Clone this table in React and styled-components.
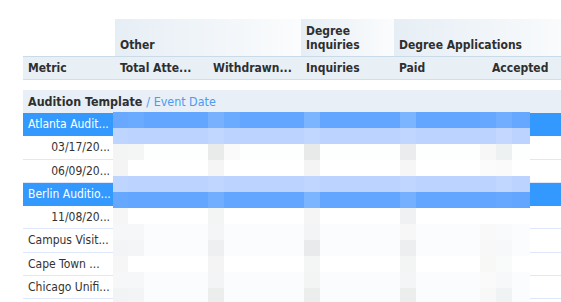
import React from "react";
import styled, { createGlobalStyle } from "styled-components";

const GlobalStyle = createGlobalStyle`
  html, body { margin: 0; padding: 0; background: #ffffff; overflow: hidden; }
  body { font-family: "DejaVu Sans Condensed", "DejaVu Sans", Tahoma, sans-serif; }
`;

const COLS = "92px 93px 93px 93px 93px 93px";

const Page = styled.div`
  position: relative;
  width: 561px;
  height: 302px;
  overflow: hidden;
  padding: 19px 0 0 23px;
  box-sizing: border-box;
  color: #2f2f2f;
`;

const Grid = styled.div`
  display: grid;
  grid-template-columns: ${COLS};
  width: 557px;
`;

const GroupRow = styled(Grid)`
  height: 37px;
`;

const GroupCell = styled.div`
  grid-column: span ${(p) => p.$span || 1};
  display: flex;
  align-items: flex-end;
  padding: 0 5px 4px;
  font-size: 12px;
  font-weight: bold;
  line-height: 14px;
  background: ${(p) =>
    p.$blank ? "transparent" : "linear-gradient(to right, #e6eef5, #fbfcfd)"};
`;

const HeadRow = styled(Grid)`
  height: 22px;
  background: #e8f0f6;
  border-top: 1px solid #c9dbe8;
  border-bottom: 1px solid #d0dfea;
`;

const HeadCell = styled.div`
  display: flex;
  align-items: center;
  padding: 0 5px;
  font-size: 12px;
  font-weight: bold;
  white-space: nowrap;
  overflow: hidden;
`;

const Band = styled.div`
  margin-top: 10px;
  height: 23px;
  width: 557px;
  background: #e8eff6;
  display: flex;
  align-items: center;
  padding: 0 5px;
  box-sizing: border-box;
  font-size: 12.4px;
  font-weight: bold;
  white-space: nowrap;
`;

const Crumb = styled.span`
  font-weight: normal;
  color: #4b9cf0;
  margin-left: 4px;
`;

const Body = styled.div`
  display: flex;
  flex-direction: column;
`;

const Row = styled(Grid)`
  height: 23.25px;
  box-sizing: border-box;
  background: ${(p) => (p.$active ? "#3399ff" : "#ffffff")};
  border-bottom: 1px solid ${(p) => (p.$active ? "#3399ff" : "#dfe8fb")};
`;

const MetricCell = styled.div`
  display: flex;
  align-items: center;
  justify-content: ${(p) => (p.$child ? "flex-end" : "flex-start")};
  padding: 0 5px;
  font-size: 12px;
  white-space: nowrap;
  overflow: hidden;
  color: ${(p) => (p.$active ? "#ffffff" : "#333333")};
`;

/* pixelated cover drawn over the figure columns */
const Mosaic = styled.div`
  position: absolute;
  left: 113px;
  top: 112px;
  width: 417px;
  display: grid;
  grid-template-columns: 15px repeat(25, 16px) 2px;
  grid-auto-rows: 16px;
`;

const Tile = styled.div``;

const groups = [
  { label: "", span: 1, blank: true },
  { label: "Other", span: 2 },
  { label: "Degree Inquiries", span: 1 },
  { label: "Degree Applications", span: 2 },
];

const heads = ["Metric", "Total Atte...", "Withdrawn...", "Inquiries", "Paid", "Accepted"];

const rows = [
  { label: "Atlanta Audit...", active: true },
  { label: "03/17/20...", child: true },
  { label: "06/09/20...", child: true },
  { label: "Berlin Auditio...", active: true },
  { label: "11/08/20...", child: true },
  { label: "Campus Visit..." },
  { label: "Cape Town ..." },
  { label: "Chicago Unifi..." },
  { label: "" },
];

const BLUE = "#62a6ff";
const PALE = "#bcd3ff";

const tiles = [
  { base: BLUE, marks: { 0: "#68a9ff", 1: "#6aabff", 6: "#78b2ff", 7: "#6aaaff", 12: "#7bb4ff", 18: "#7bb4ff", 23: "#66a8ff", 24: "#72aeff", 25: "#66a8ff", 26: "#66a8ff" } },
  { base: PALE, marks: { 0: "#bed5ff", 6: "#c2d7ff", 12: "#c2d7ff", 18: "#c1d6ff", 24: "#c4d8ff" } },
  { base: "#fdfefe", marks: { 0: "#f3f4f4", 1: "#f4f5f5", 6: "#e9eaea", 7: "#fafafa", 12: "#e8e9e9", 18: "#ebeced", 23: "#f7f7f7", 24: "#eef1f1" } },
  { base: "#ffffff", marks: { 0: "#f4f4f4", 6: "#f5f5f5", 12: "#f4f4f4", 18: "#f6f6f6", 23: "#fbfbfb", 24: "#fafafa" } },
  { base: PALE, marks: { 0: "#bed5ff", 6: "#c0d6ff", 12: "#c0d6ff", 18: "#c0d6ff", 24: "#c2d7ff" } },
  { base: BLUE, marks: { 0: "#66a8ff", 6: "#72aeff", 12: "#7bb4ff", 18: "#74b0ff", 24: "#66a8ff" } },
  { base: "#ffffff", marks: { 0: "#f6f6f6", 6: "#f3f4f4", 12: "#f4f5f4", 18: "#f0f1f2" } },
  { base: "#fbfcfe", marks: { 0: "#f6f7f8", 1: "#f6f7f8", 6: "#f4f5f6", 12: "#f3f4f5", 18: "#f7f7f7", 23: "#f9f9f9", 24: "#f9fafb" } },
  { base: "#fbfcfe", marks: { 0: "#f3f4f6", 1: "#f4f5f7", 6: "#eeeff1", 12: "#e9eaec", 18: "#edeef0", 23: "#f8f8f8", 24: "#f7f8f9" } },
  { base: "#ffffff", marks: { 0: "#f6f6f6", 6: "#f4f4f4", 12: "#f4f5f5", 18: "#f3f4f4", 23: "#f8f8f6", 24: "#f8fbfa" } },
  { base: "#fbfcfe", marks: { 0: "#f6f7f8", 1: "#f6f7f8", 6: "#f3f4f5", 12: "#f3f4f4", 18: "#f4f5f6", 23: "#fafafa", 24: "#f7f8f9" } },
  { base: "#fbfcfe", marks: { 0: "#f2f3f5", 1: "#f3f4f6", 6: "#eceded", 12: "#eceded", 18: "#eceeee", 23: "#f8f8f8", 24: "#f0f3f3" } },
];

export default function App() {
  return (
    <>
      <GlobalStyle />
      <Page>
        <GroupRow>
          {groups.map((g, i) => (
            <GroupCell key={i} $span={g.span} $blank={g.blank}>
              {g.label}
            </GroupCell>
          ))}
        </GroupRow>
        <HeadRow>
          {heads.map((h) => (
            <HeadCell key={h}>{h}</HeadCell>
          ))}
        </HeadRow>
        <Band>
          Audition Template<Crumb>/ Event Date</Crumb>
        </Band>
        <Body>
          {rows.map((r, i) => (
            <Row key={i} $active={r.active}>
              <MetricCell $active={r.active} $child={r.child}>
                {r.label}
              </MetricCell>
            </Row>
          ))}
        </Body>
        <Mosaic>
          {tiles.map((t, ri) =>
            Array.from({ length: 27 }, (_, ci) => (
              <Tile
                key={`${ri}-${ci}`}
                style={{ background: t.marks[ci] || t.base }}
              />
            ))
          )}
        </Mosaic>
      </Page>
    </>
  );
}
